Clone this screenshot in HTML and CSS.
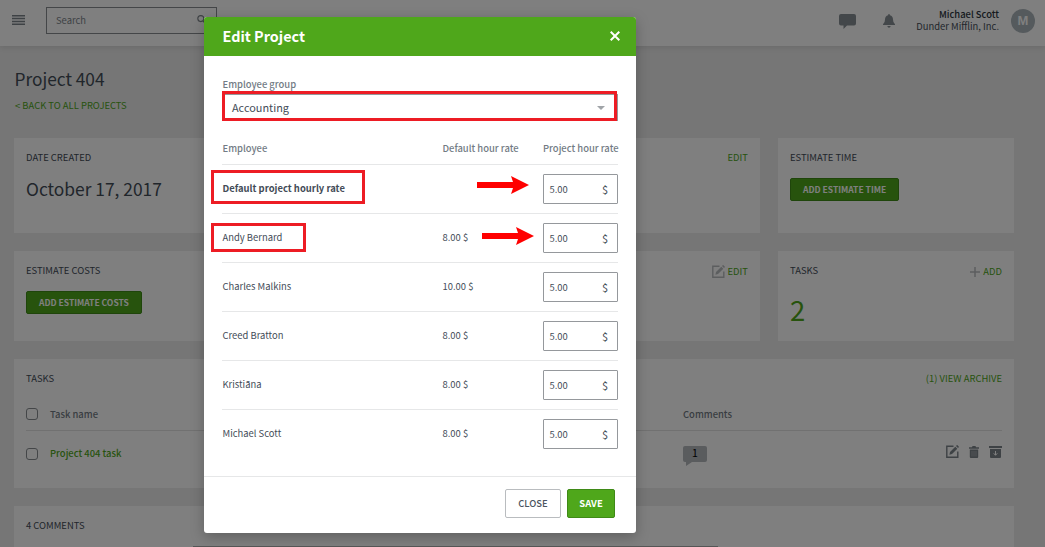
FILE: index.html
```html
<!DOCTYPE html>
<html lang="en">
<head>
<meta charset="utf-8">
<title>Edit Project</title>
<link rel="stylesheet" href="styles.css">
</head>
<body>
<svg class="defs" width="0" height="0">
  <symbol id="edit" viewBox="0 0 13 13">
    <path d="M7.5 1.2H.8v11h11V6.6" fill="none" stroke="currentColor" stroke-width="1.4"/>
    <path d="M3.4 9.8l.6-2.7L9.3 1.7l2 2-5.3 5.4zM10 1l.7-.7q.4-.4.8 0l1.2 1.2q.4.4 0 .8l-.7.7z" fill="currentColor"/>
  </symbol>
</svg>
<div class="page">
  <header class="topbar">
    <svg class="burger" viewBox="0 0 13 10"><path d="M0 .7h13M0 3.5h13M0 6.4h13M0 9.2h13" stroke="currentColor" stroke-width="1.5"/></svg>
    <div class="search">
      <span>Search</span>
      <svg width="9" height="9" viewBox="0 0 9 9"><circle cx="3.8" cy="3.6" r="3" fill="none" stroke="currentColor" stroke-width="1.1"/><path d="M6 6l2.4 2.4" stroke="currentColor" stroke-width="1.3"/></svg>
    </div>
    <div class="account">
      <svg class="chat" viewBox="0 0 17 15"><path d="M2 0h13q2 0 2 2v7.500q0 2-2 2H8L4.500 15v-3.500H2q-2 0-2-2V2q0-2 2-2z" fill="currentColor"/></svg>
      <svg class="bell" viewBox="0 0 12 14"><path d="M6 0q.9 0 .9 1.300Q10 2.200 10 5.500q0 3.500 2 4.700v.8H0v-.8q2-1.200 2-4.700 0-3.300 3.100-4.200Q5.100 0 6 0zM4.300 12h3.400q-.3 1.800-1.700 1.800T4.300 12z" fill="currentColor"/></svg>
      <div class="who"><b>Michael Scott</b><span>Dunder Mifflin, Inc.</span></div>
      <div class="avatar">M</div>
    </div>
  </header>
  <main class="content">
    <h1 class="title">Project 404</h1>
    <a class="back">&lt; BACK TO ALL PROJECTS</a>
    <section class="grid">
      <article class="card wide">
        <div class="card-head"><span>DATE CREATED</span><a>EDIT</a></div>
        <div class="value">October 17, 2017</div>
      </article>
      <article class="card">
        <div class="card-head"><span>ESTIMATE TIME</span></div>
        <button class="btn">ADD ESTIMATE TIME</button>
      </article>
      <article class="card wide short">
        <div class="card-head"><span>ESTIMATE COSTS</span><a class="with-icon"><svg width="13" height="13"><use href="#edit"/></svg>EDIT</a></div>
        <button class="btn">ADD ESTIMATE COSTS</button>
      </article>
      <article class="card short">
        <div class="card-head"><span>TASKS</span><a class="with-icon plus"><svg width="10" height="10" viewBox="0 0 10 10"><path d="M5 0v10M0 5h10" stroke="currentColor" stroke-width="1.500"/></svg>ADD</a></div>
        <div class="count">2</div>
      </article>
    </section>
    <section class="card tasks">
      <div class="card-head"><span>TASKS</span><a>(1) VIEW ARCHIVE</a></div>
      <div class="task-row task-labels"><i class="check"></i><span>Task name</span><span>Comments</span></div>
      <div class="task-row"><i class="check"></i><a>Project 404 task</a>
        <div class="bubble">1</div>
        <div class="actions">
          <svg width="13" height="13"><use href="#edit"/></svg>
          <svg width="10" height="12" viewBox="0 0 10 12"><path d="M0 1.300h3L3.500 0h3L7 1.300h3v1.500H0zM.8 3.600h8.400V11q0 1-1 1H1.800q-1 0-1-1z" fill="currentColor"/><path d="M3 5v5.500M5 5v5.500M7 5v5.500" stroke="#c4c6c8" stroke-width=".6"/></svg>
          <svg width="13" height="12" viewBox="0 0 13 12"><path d="M0 0h13v2H0zM1 3h11v8q0 1-1 1H2q-1 0-1-1z" fill="currentColor"/><path d="M6.500 5v4M4.700 7.300l1.800 2 1.800-2" fill="none" stroke="#fff" stroke-width="1"/></svg>
        </div>
      </div>
    </section>
    <section class="card comments"><div class="card-head"><span>4 COMMENTS</span></div></section>
  </main>
</div>

<div class="overlay">
  <div class="modal">
    <div class="modal-head"><span>Edit Project</span><svg width="10" height="10" viewBox="0 0 10 10"><path d="M.7.700l8.600 8.600M9.300.700L.700 9.300" stroke="#fff" stroke-width="2"/></svg></div>
    <div class="modal-body">
      <label class="group-label">Employee group</label>
      <div class="select"><span>Accounting</span><i class="caret"></i></div>
      <div class="row labels"><span>Employee</span><span>Default hour rate</span><span>Project hour rate</span></div>
      <div class="row"><b>Default project hourly rate</b><span></span><div class="input"><span>5.00</span><span class="unit">$</span></div></div>
      <div class="row"><span>Andy Bernard</span><span>8.00 $</span><div class="input"><span>5.00</span><span class="unit">$</span></div></div>
      <div class="row"><span>Charles Malkins</span><span>10.00 $</span><div class="input"><span>5.00</span><span class="unit">$</span></div></div>
      <div class="row"><span>Creed Bratton</span><span>8.00 $</span><div class="input"><span>5.00</span><span class="unit">$</span></div></div>
      <div class="row"><span>Kristiāna</span><span>8.00 $</span><div class="input"><span>5.00</span><span class="unit">$</span></div></div>
      <div class="row"><span>Michael Scott</span><span>8.00 $</span><div class="input"><span>5.00</span><span class="unit">$</span></div></div>
    </div>
    <div class="modal-foot"><button class="close">CLOSE</button><button class="save">SAVE</button></div>
    <div class="mark mark-select"></div>
    <div class="mark mark-default"></div>
    <div class="mark mark-andy"></div>
    <svg class="arrow arrow-default" viewBox="0 0 52 18"><path d="M0 6h36L34 0l18 9-18 9 2-6H0z" fill="#f00"/></svg>
    <svg class="arrow arrow-andy" viewBox="0 0 52 18"><path d="M0 6h36L34 0l18 9-18 9 2-6H0z" fill="#f00"/></svg>
  </div>
  <div class="strip"></div>
</div>
</body>
</html>
```
FILE: styles.css
```css
* { box-sizing: border-box; }
body {
  margin: 0;
  height: 547px;
  overflow: hidden;
  font: 9.43px/15px "Noto Sans CJK SC", "Noto Sans", sans-serif;
  color: #434c57;
  white-space: nowrap;
}
.defs { position: absolute; }
svg { display: block; flex: none; }
a { color: #4fa71b; }
button { font-family: inherit; margin: 0; padding: 0; }
.page { height: 547px; overflow: hidden; background: #ececec; }

.topbar {
  position: relative;
  display: flex;
  height: 46px;
  padding: 0 10px 0 12px;
  background: #fff;
  box-shadow: 0 1px 6px rgba(0, 0, 0, .12);
}
.burger { width: 13px; height: 10px; margin-top: 15px; color: #7c848a; }
.search {
  display: flex;
  justify-content: space-between;
  width: 171px;
  height: 27px;
  margin: 7px 0 0 21px;
  padding: 5px 10px 0 9px;
  border: 1px solid #888c90;
  color: #7c848a;
}
.search svg { margin-top: 2px; }
.account { display: flex; margin-left: auto; color: #868e94; }
.chat { width: 17px; height: 15px; margin-top: 14px; }
.bell { width: 12px; height: 14px; margin: 14px 0 0 27px; }
.who { display: flex; flex-direction: column; width: 104px; padding-top: 8px; text-align: right; line-height: 12px; color: #434c57; }
.who b { font-weight: 500; color: #2c343c; }
.avatar { width: 24px; height: 24px; margin: 9px 0 0 12px; border-radius: 50%; background: #aab4ba; color: #fff; font: 700 13px/24px "Liberation Sans", sans-serif; text-align: center; }

.content { padding: 20px 31px 0 14px; }
.title { margin: 0 0 6px .5px; font-size: 17.3px; line-height: 26px; font-weight: 400; }
.back { display: block; margin: 0 0 25px 1px; }
.grid { display: grid; grid-template-columns: 746px 236px; grid-template-rows: 95px 90px; gap: 18px; }
.card { background: #fff; padding: 12px 12px 0; }
.card-head { display: flex; justify-content: space-between; height: 15px; }
.value { margin-top: 9px; font-size: 17.38px; line-height: 30px; }
.btn {
  display: block;
  height: 23px;
  margin-top: 13px;
  padding: 0 12px;
  border: 1px solid #3f8a17;
  border-radius: 2px;
  background: #4fa71b;
  color: #fff;
  font-size: 8.53px;
  line-height: 19px;
  font-weight: 700;
}
.with-icon { display: flex; gap: 3px; padding-top: 1px; }
.with-icon svg { margin-top: 1px; color: #b9bcbf; }
.plus svg { margin-top: 3px; }
.count { margin-top: 11px; font-size: 27.5px; line-height: 40px; color: #4fa71b; }
.tasks { height: 129px; margin-top: 18px; }
.task-row { display: grid; grid-template-columns: 24px 633px 24px 1fr; height: 44px; padding-top: 15px; font-weight: 500; color: #727b84; }
.task-labels { height: 33px; margin-top: 12px; padding-top: 9px; border-bottom: 1px solid #e2e2e2; }
.check { width: 12px; height: 12px; margin-top: 1px; border: 1px solid #888c90; border-radius: 3px; }
.task-row:last-child .check { margin-top: 2px; }
.bubble { position: relative; height: 16px; border-radius: 2px; background: #b4b8bc; color: #000; font-size: 10.5px; font-weight: 400; line-height: 14px; text-align: center; }
.bubble::after { content: ""; position: absolute; left: 3px; top: 16px; border-top: 4px solid #b4b8bc; border-right: 6px solid transparent; }
.actions { display: flex; justify-content: flex-end; gap: 10px; color: #7c848a; }
.actions svg:first-child { margin-top: -1px; }
.comments { height: 60px; margin-top: 18px; }

.overlay { position: absolute; inset: 0; overflow: hidden; background: rgba(0, 0, 0, .5); }
.modal {
  position: relative;
  display: flex;
  flex-direction: column;
  width: 432px;
  height: 516px;
  margin: 17px 0 0 204px;
  border-radius: 3px;
  background: #fff;
  box-shadow: 0 4px 14px rgba(0, 0, 0, .25);
}
.modal-head {
  display: flex;
  justify-content: space-between;
  align-items: center;
  height: 39px;
  padding: 0 16px 0 18.5px;
  border-radius: 3px 3px 0 0;
  background: #4fa71b;
  color: #fff;
  font-size: 14.38px;
  font-weight: 700;
}
.modal-head span { padding-bottom: 2px; }
.modal-head svg { margin-bottom: 1px; }
.modal-body { height: 421px; padding: 21px 18px 0; border-bottom: 1px solid #e6e7e8; }
.group-label { display: block; height: 17px; padding-left: .5px; font-weight: 500; color: #727b84; }
.select { display: flex; justify-content: space-between; align-items: center; height: 27px; padding: 0 12px 0 9px; border: 1px solid #95989c; font-size: 10.9px; }
.caret { border: 4px solid transparent; border-top-color: #a0a4a8; border-bottom: 0; }
.row { display: grid; grid-template-columns: 220px 101px 75px; height: 49px; padding-top: 16px; border-bottom: 1px solid #e6e7e8; }
.row > span, .row > b { padding-left: .5px; }
.row > span:nth-child(3) { padding-left: 0; }
.row:last-child { border-bottom: 0; }
.row b { font-weight: 700; }
.labels { height: 44px; padding-top: 20px; font-weight: 500; color: #727b84; }
.input { display: flex; justify-content: space-between; height: 30px; margin-top: -7px; padding: 7px 9px 0 5.5px; border: 1px solid #95989c; border-radius: 1px; }
.unit { font-size: 10.9px; }
.modal-foot { display: flex; justify-content: flex-end; gap: 6px; padding: 12px 21px 0 0; }
.modal-foot button { height: 29px; border-radius: 2px; font-size: 9.43px; line-height: 25px; }
.close { width: 56px; border: 1px solid #b9bcbf; background: #fff; color: #4b5560; font-weight: 500; }
.save { width: 48px; border: 1px solid #3f8a17; background: #4fa71b; color: #fff; font-weight: 700; }

.mark { position: absolute; border: 3px solid #ed1c24; }
.mark-select { left: 18px; top: 74px; width: 395px; height: 30px; }
.mark-default { left: 7px; top: 153px; width: 154px; height: 34px; }
.mark-andy { left: 7px; top: 206px; width: 95px; height: 29px; }
.arrow { position: absolute; width: 52px; height: 18px; }
.arrow-default { left: 273px; top: 159px; }
.arrow-andy { left: 278px; top: 210px; }
.strip { position: absolute; left: 193px; top: 546px; width: 525px; height: 1px; background: #555; }
```
